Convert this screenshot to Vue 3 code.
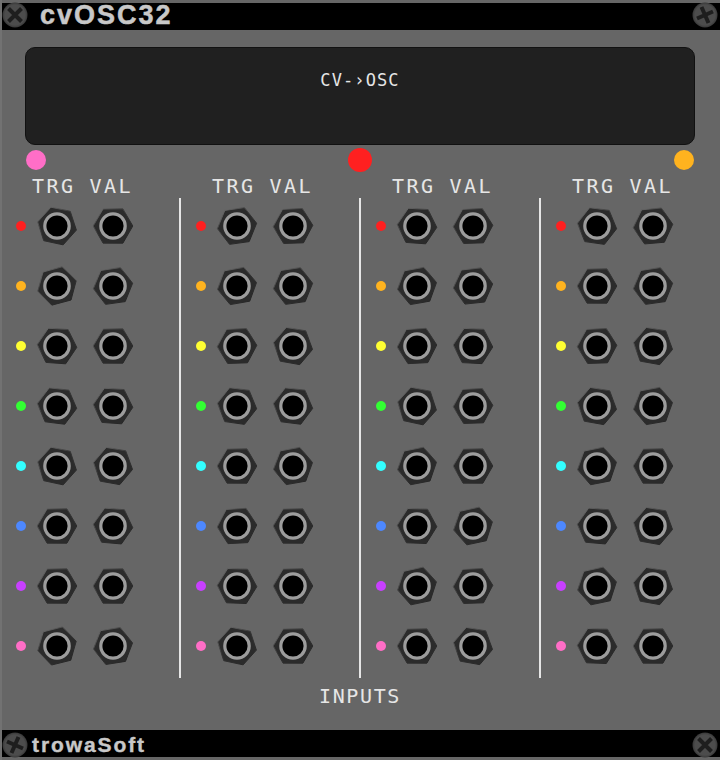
<template>
  <div class="panel">
    <svg width="0" height="0" class="defs">
      <defs>
        <linearGradient id="nut-edge" gradientUnits="userSpaceOnUse" x1="-12" y1="-16" x2="12" y2="16">
          <stop offset="0" stop-color="#666666" />
          <stop offset="0.45" stop-color="#343434" />
          <stop offset="1" stop-color="#262626" />
        </linearGradient>
        <radialGradient id="screw-face">
          <stop offset="0.8" stop-color="#4c4c4c" />
          <stop offset="1" stop-color="#383838" />
        </radialGradient>
      </defs>
    </svg>

    <div class="top-bar">
      <svg class="screw screw-top" viewBox="-15 -15 30 30">
        <circle r="12.5" fill="url(#screw-face)" />
        <path d="M-6.5 -6.5 6.5 6.5M6.5 -6.5 -6.5 6.5" class="slot" />
      </svg>
      <div class="title">cvOSC32</div>
      <svg class="screw screw-top screw-right" viewBox="-15 -15 30 30">
        <circle r="12.5" fill="url(#screw-face)" />
        <path d="M-3.5 -8 3.5 8M-8 3.5 8 -3.5" class="slot" />
      </svg>
    </div>

    <div class="main">
      <div class="screen">CV-›OSC</div>
      <div class="lights">
        <span class="light" style="background: #ff6ec7"></span>
        <span class="light" style="background: #ff2020"></span>
        <span class="light" style="background: #ffb31f"></span>
      </div>
      <div class="labels">
        <div v-for="c in 4" :key="c" class="label-pair"><span>TRG</span><span>VAL</span></div>
      </div>
      <div class="columns">
        <div v-for="(col, ci) in columns" :key="ci" class="column">
          <div v-for="(row, ri) in col" :key="ri" class="row">
            <span class="dot" :style="{ background: colors[ri] }"></span>
            <svg v-for="(rot, ji) in row" :key="ji" class="jack" viewBox="-21 -21 42 42">
              <polygon :points="nut(rot)" fill="#2b2b2b" stroke="url(#nut-edge)" stroke-width="1" stroke-linejoin="round" />
              <circle r="12.2" fill="#000" stroke="#9c9c9c" stroke-width="3.2" />
            </svg>
          </div>
        </div>
      </div>
      <div class="inputs">INPUTS</div>
    </div>

    <div class="bottom-bar">
      <svg class="screw screw-bottom" viewBox="-15 -15 30 30">
        <circle r="12.5" fill="url(#screw-face)" />
        <path d="M3.5 -8 -3.5 8M-8 -3.5 8 3.5" class="slot" />
      </svg>
      <div class="brand">trowaSoft</div>
      <svg class="screw screw-bottom screw-right" viewBox="-15 -15 30 30">
        <circle r="12.5" fill="url(#screw-face)" />
        <path d="M-6.5 -6.5 6.5 6.5M6.5 -6.5 -6.5 6.5" class="slot" />
      </svg>
    </div>
  </div>
</template>
<script setup>
const colors = ['#ff2020', '#ffb31f', '#ffff33', '#33ff33', '#33ffff', '#4d88ff', '#c840ff', '#ff6ec7']

// nut angle of every jack: [column][row] = [TRG, VAL]
const columns = [
  [[-18, 30], [15, 22], [-26, 30], [-23, -26], [-18, -20], [30, -25], [30, 30], [16, 21]],
  [[22, 28], [20, 22], [28, -20], [-22, -23], [30, 20], [27, 30], [-28, 30], [-18, 30]],
  [[-26, 28], [20, 24], [27, -27], [-18, 28], [19, 30], [-28, 18], [18, 28], [30, -20]],
  [[-22, 25], [30, 22], [28, -20], [-20, 20], [19, 30], [-25, -20], [18, -20], [-28, 30]]
]

const nut = (rot) => {
  const pts = []
  for (let i = 0; i < 6; i++) {
    const a = ((rot + i * 60 - 90) * Math.PI) / 180
    pts.push((19.8 * Math.cos(a)).toFixed(2) + ',' + (19.8 * Math.sin(a)).toFixed(2))
  }
  return pts.join(' ')
}
</script>
<style scoped>
.panel {
  width: 720px;
  height: 760px;
  box-sizing: border-box;
  padding: 3px 0 3px 0;
  background: #666666;
  box-shadow: inset 2px 0 0 #727272;
  display: flex;
  flex-direction: column;
  font-family: "DejaVu Sans Mono", monospace;
  color: #e6e6e6;
  overflow: hidden;
}
.top-bar,
.bottom-bar {
  height: 27px;
  margin-left: 2px;
  background: #000;
  display: flex;
  align-items: center;
  font-family: "Liberation Sans", Arial, sans-serif;
  font-weight: bold;
  color: #c8c8c8;
}
.screw {
  width: 30px;
  height: 30px;
  flex: none;
  margin-left: -2px;
}
.screw-top {
  margin-top: -3px;
}
.screw-bottom {
  margin-top: 3px;
}
.screw-right {
  margin-left: auto;
}
.slot {
  stroke: #1e1e1e;
  stroke-width: 4;
  fill: none;
}
.title {
  font-size: 27px;
  letter-spacing: 2px;
  -webkit-text-stroke: 0.5px #c8c8c8;
  margin-left: 10px;
  margin-top: -3px;
}
.brand {
  font-size: 21px;
  letter-spacing: 1.9px;
  -webkit-text-stroke: 0.4px #c8c8c8;
  margin-left: 2px;
  margin-top: 3px;
}
.main {
  flex: 1;
  display: flex;
  flex-direction: column;
  padding-top: 17px;
}
.screen {
  margin: 0 25px;
  height: 98px;
  flex: none;
  box-sizing: border-box;
  background: #202020;
  border: 1px solid #111;
  border-radius: 10px;
  text-align: center;
  padding-top: 21px;
  font-size: 17px;
  line-height: 22px;
  letter-spacing: 1.1px;
}
.lights {
  display: flex;
  justify-content: space-between;
  padding: 5px 26px 0;
}
.light {
  width: 20px;
  height: 20px;
  border-radius: 50%;
}
.light:nth-child(2) {
  width: 24px;
  height: 24px;
  margin-top: -2px;
  margin-bottom: -2px;
}
.labels {
  display: grid;
  grid-template-columns: repeat(4, 180px);
  height: 25px;
  margin-top: 3px;
  font-size: 20px;
  line-height: 26px;
  letter-spacing: 2.4px;
}
.label-pair {
  display: flex;
  gap: 14.2px;
  padding-left: 32px;
}
.columns {
  display: grid;
  grid-template-columns: repeat(4, 180px);
  height: 480px;
}
.column + .column {
  box-shadow: -1px 0 0 #e6e6e6, inset 1px 0 0 #e6e6e6;
}
.row {
  height: 60px;
  display: flex;
  align-items: center;
  gap: 14px;
  padding-left: 16px;
}
.row:first-child {
  margin-top: -2px;
}
.dot {
  width: 10px;
  height: 10px;
  border-radius: 50%;
  flex: none;
  margin-right: -4px;
}
.jack {
  width: 42px;
  height: 42px;
  flex: none;
  filter: blur(0.3px);
}
.inputs {
  text-align: center;
  font-size: 20px;
  line-height: 24px;
  letter-spacing: 1.6px;
  margin-top: 6px;
}
.defs {
  position: absolute;
}
</style>
<style>
html, body { margin: 0; background: #666666; }
</style>
